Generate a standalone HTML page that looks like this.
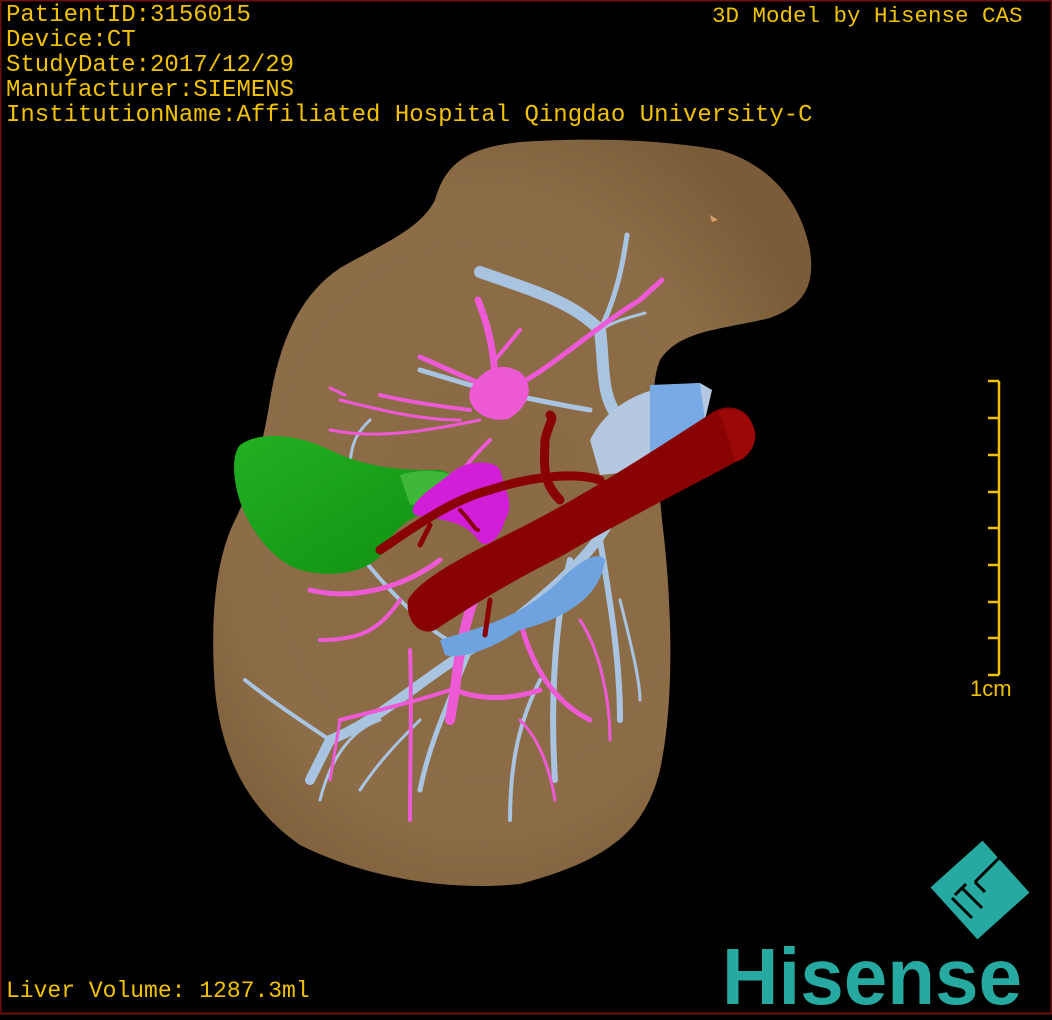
<!DOCTYPE html>
<html><head><meta charset="utf-8"><style>
html,body{margin:0;padding:0;background:#000;}
#c{position:relative;width:1052px;height:1020px;overflow:hidden;background:#000;}
.t{position:absolute;font-family:"Liberation Mono",monospace;color:#f2c200;font-size:24px;line-height:25px;white-space:pre;}
</style></head><body><div id="c">
<svg width="1052" height="1020" style="position:absolute;left:0;top:0">
<defs>
<radialGradient id="lv" cx="0.45" cy="0.5" r="0.6">
<stop offset="0" stop-color="#8a6a44"/><stop offset="0.7" stop-color="#8d6d48"/><stop offset="1" stop-color="#7a5c38"/>
</radialGradient>
<linearGradient id="gb" x1="0" y1="0" x2="1" y2="1"><stop offset="0" stop-color="#22b022"/><stop offset="1" stop-color="#0f8f12"/></linearGradient>
</defs>
<rect x="0.5" y="0.5" width="1051" height="1013" fill="none" stroke="#6b1010" stroke-width="2"/>
<path d="M435,200 C445,165 465,148 520,142 C580,138 650,138 720,150 C770,165 800,200 810,250 C815,285 805,305 770,318 C720,330 680,330 660,360 C648,390 655,440 662,520 C672,600 675,700 660,770 C645,830 610,860 520,884 C440,892 360,875 300,845 C250,810 222,760 215,690 C210,620 215,560 235,520 C250,490 262,450 270,400 C280,340 300,295 340,268 C380,245 420,230 435,200 Z" fill="url(#lv)"/>
<path d="M710,215 l8,5 -6,2z" fill="#d8a070"/>
<g stroke="#a9c4e0" fill="none" stroke-linecap="round">
<path d="M480,272 C530,290 570,300 600,330 C605,370 600,395 620,420" stroke-width="12"/>
<path d="M600,330 C615,300 622,270 627,235" stroke-width="5"/>
<path d="M600,330 C620,318 640,315 645,313" stroke-width="3"/>
<path d="M420,370 L470,385 C510,395 560,405 590,410" stroke-width="5"/>
<path d="M610,520 C590,560 520,620 470,650 C420,680 380,720 330,740 C320,760 310,780 310,780" stroke-width="10"/>
<path d="M330,740 C300,720 270,700 245,680" stroke-width="4"/>
<path d="M470,650 C440,640 420,620 400,600 C370,570 330,520 320,490" stroke-width="4"/>
<path d="M600,540 C610,600 620,660 620,720" stroke-width="6"/>
<path d="M570,560 C555,620 550,700 555,780" stroke-width="6"/>
<path d="M470,650 C450,700 430,740 420,790" stroke-width="5"/>
<path d="M420,720 C400,740 380,760 360,790" stroke-width="3"/>
<path d="M540,680 C520,720 510,760 510,820" stroke-width="4"/>
<path d="M380,720 C350,730 330,760 320,800" stroke-width="3"/>
<path d="M620,600 C630,640 640,680 640,700" stroke-width="3"/>
<path d="M350,470 C350,440 360,430 370,420" stroke-width="3"/>
</g>
<g stroke="#ee5ad6" fill="none" stroke-linecap="round">
<path d="M478,300 C490,330 495,360 495,385" stroke-width="7"/>
<path d="M495,360 L520,330" stroke-width="4"/>
<path d="M420,357 C450,370 480,385 500,390" stroke-width="5"/>
<path d="M495,395 C540,380 590,330 640,300 L662,280" stroke-width="5"/>
<path d="M470,410 C430,405 400,400 380,395" stroke-width="4"/>
<path d="M480,420 C430,430 380,440 330,430" stroke-width="3"/>
<path d="M330,388 L345,395 M340,400 C380,410 420,420 460,420" stroke-width="3"/>
<path d="M490,440 C470,460 460,470 455,490" stroke-width="4"/>
<path d="M440,560 C400,590 350,600 310,590" stroke-width="5"/>
<path d="M400,600 C380,630 360,640 320,640" stroke-width="4"/>
<path d="M490,560 C470,600 460,640 455,690 L450,720" stroke-width="10"/>
<path d="M450,690 C420,700 380,710 340,720" stroke-width="4"/>
<path d="M520,620 C530,660 550,700 590,720" stroke-width="5"/>
<path d="M455,690 C480,700 510,700 540,690" stroke-width="5"/>
<path d="M410,650 C412,700 410,760 410,820" stroke-width="4"/>
<path d="M580,620 C600,650 610,700 610,740" stroke-width="3"/>
<path d="M520,720 C540,740 550,770 555,800" stroke-width="3"/>
<path d="M340,720 L330,780" stroke-width="3"/>
</g>
<path d="M470,390 C480,370 500,360 520,372 C535,385 530,405 510,418 C490,425 465,410 470,390Z" fill="#ee5ad6"/>
<path d="M590,440 C610,400 650,385 700,383 L712,390 L705,420 L650,470 L600,475 Z" fill="#b4c8e2"/>
<path d="M650,385 L700,383 L705,420 L650,470 Z" fill="#78aae6"/>
<path d="M440,640 C470,630 520,620 560,580 C580,560 600,550 605,560 C600,600 560,620 520,630 C490,650 460,660 445,655Z" fill="#6fa3e0"/>
<path d="M240,445 C260,430 300,435 330,450 C370,470 410,470 440,470 C460,475 465,490 450,500 C430,510 400,520 390,540 C380,570 340,580 300,570 C270,560 240,520 235,480 C233,465 234,452 240,445Z" fill="url(#gb)"/>
<path d="M400,475 C420,468 450,470 460,480 C460,495 440,500 410,505 Z" fill="#3fb83a"/>
<path d="M455,470 C470,460 495,460 500,470 C505,490 515,505 505,520 C500,540 485,550 478,540 C465,520 440,520 415,515 C405,505 430,490 455,470Z" fill="#d21ed8"/>
<path d="M408,600 C420,578 470,553 520,528 C580,498 650,453 710,414 C725,403 745,406 752,423 C758,445 745,458 730,465 C680,492 620,522 560,557 C510,582 470,607 435,630 C420,637 405,620 408,600Z" fill="#8a0303"/>
<path d="M718,412 C735,405 752,415 755,432 C757,448 745,460 735,462 C730,445 725,425 718,412Z" fill="#9c0808"/>
<g stroke="#8a0303" fill="none" stroke-linecap="round">
<path d="M560,500 C540,480 545,460 545,440 C548,425 555,418 550,415" stroke-width="9"/>
<path d="M600,480 C570,470 520,480 490,490 C450,500 410,530 380,550" stroke-width="9"/>
<path d="M430,525 L420,545" stroke-width="5"/>
<path d="M460,510 C470,520 475,530 478,530" stroke-width="4"/>
<path d="M490,600 L485,635" stroke-width="5"/>
</g>
<g stroke="#f2c200" stroke-width="2.5">
<line x1="999" y1="381" x2="999" y2="675"/>
<line x1="988" y1="381" x2="999" y2="381"/><line x1="988" y1="418" x2="999" y2="418"/><line x1="988" y1="455" x2="999" y2="455"/><line x1="988" y1="492" x2="999" y2="492"/><line x1="988" y1="528" x2="999" y2="528"/><line x1="988" y1="565" x2="999" y2="565"/><line x1="988" y1="602" x2="999" y2="602"/><line x1="988" y1="638" x2="999" y2="638"/><line x1="988" y1="675" x2="999" y2="675"/>
</g>
<g transform="translate(980,890) rotate(-42)">
<rect x="-35" y="-35" width="70" height="70" fill="#26a9a0"/>
</g>
<g stroke="#000" stroke-width="3" fill="none">
<path d="M952,898 L972,918 M962,888 L982,908 M955,895 L966,884"/>
<path d="M975,882 L1000,857 M975,882 L985,892"/>
</g>
<text x="722" y="1004" font-family="Liberation Sans,sans-serif" font-weight="bold" font-size="80" fill="#26a9a0" textLength="300" lengthAdjust="spacingAndGlyphs">Hisense</text>
</svg>
<div class="t" style="left:6px;top:3px">PatientID:3156015
Device:CT
StudyDate:2017/12/29
Manufacturer:SIEMENS
InstitutionName:Affiliated Hospital Qingdao University-C</div>
<div class="t" style="left:712px;top:4px;font-size:22.5px">3D Model by Hisense CAS</div>
<div class="t" style="left:6px;top:979px;font-size:23px">Liver Volume: 1287.3ml</div>
<div class="t" style="left:970px;top:676px;font-size:22px;font-family:'Liberation Sans',sans-serif">1cm</div>
</div></body></html>
